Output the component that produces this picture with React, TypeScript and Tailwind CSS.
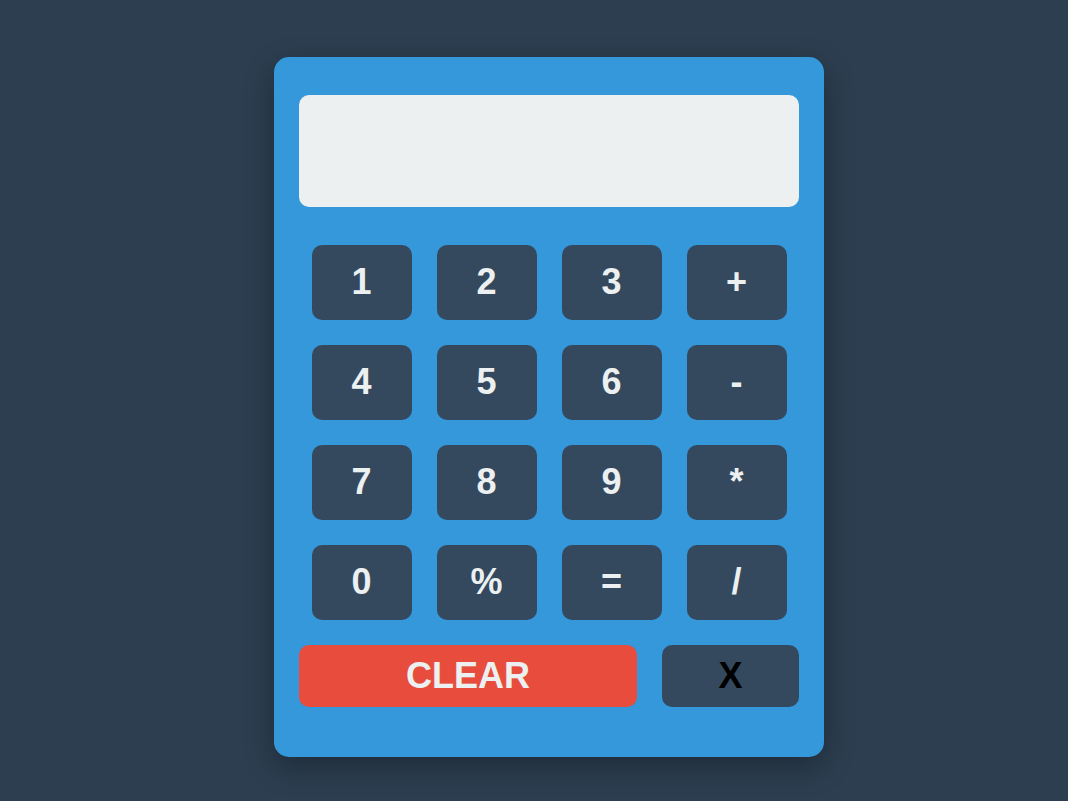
import React, { useState } from 'react';

const keys = ['1', '2', '3', '+', '4', '5', '6', '-', '7', '8', '9', '*', '0', '%', '=', '/'];

const App: React.FC = () => {
  const [value, setValue] = useState('');

  const press = (k: string) => {
    if (k === '=') {
      try {
        // eslint-disable-next-line no-new-func
        setValue(String(Function(`return (${value})`)()));
      } catch {
        setValue('Error');
      }
      return;
    }
    setValue((v) => v + k);
  };

  return (
    <div
      className="min-h-screen w-full bg-[#2c3e50] pt-[57px] pl-[274px]"
      style={{ fontFamily: '"Liberation Sans", Arial, sans-serif' }}
    >
      {/* Calculator body */}
      <div className="w-[550px] h-[700px] rounded-[15px] bg-[#3498db] px-[25px] pt-[38px] shadow-[0_10px_30px_rgba(0,0,0,0.3)]">
        {/* Display */}
        <div className="h-[112px] w-full rounded-[10px] bg-[#ecf0f1] flex items-center justify-end px-5 text-4xl text-[#2c3e50] font-bold overflow-hidden">
          {value}
        </div>

        {/* Keypad */}
        <div className="mt-[25px] grid grid-cols-4 auto-rows-[100px] place-items-center">
          {keys.map((k) => (
            <button
              key={k}
              onClick={() => press(k)}
              className="w-[100px] h-[75px] rounded-[10px] bg-[#34495e] text-[#ecf0f1] text-4xl font-bold flex items-center justify-center"
            >
              {k}
            </button>
          ))}
        </div>

        {/* Bottom row */}
        <div className="mt-[13px] flex justify-between">
          <button
            onClick={() => setValue('')}
            className="w-[338px] h-[62px] rounded-[10px] bg-[#e74c3c] text-[#ecf0f1] text-4xl font-bold flex items-center justify-center"
          >
            CLEAR
          </button>
          <button
            onClick={() => setValue((v) => v.slice(0, -1))}
            className="w-[137px] h-[62px] rounded-[10px] bg-[#34495e] text-black text-4xl font-bold flex items-center justify-center"
          >
            X
          </button>
        </div>
      </div>
    </div>
  );
};

export default App;
